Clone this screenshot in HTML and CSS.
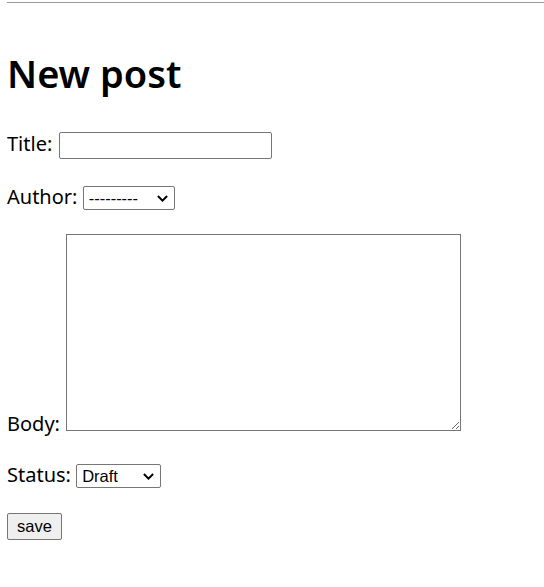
FILE: index.html
```html
<!DOCTYPE html>
<html lang="en">
<head>
<meta charset="utf-8">
<title>New post</title>
<link rel="stylesheet" href="styles.css">
</head>
<body>
<hr class="rule">
<h1 class="heading">New post</h1>
<form class="post-form">
  <p class="row"><label for="id_title">Title:</label> <input type="text" id="id_title" class="field-text"></p>
  <p class="row"><label for="id_author">Author:</label> <span class="select-wrap"><select id="id_author" class="field-select field-author"><option>---------</option></select><svg class="chevron" width="11" height="7" viewBox="0 0 11 7" aria-hidden="true"><path d="M0.9 1 L5.5 5.6 L10.1 1" fill="none" stroke="#000" stroke-width="2"/></svg></span></p>
  <p class="row"><label for="id_body">Body:</label> <textarea id="id_body" class="field-area"></textarea></p>
  <p class="row"><label for="id_status">Status:</label> <span class="select-wrap"><select id="id_status" class="field-select field-status"><option>Draft</option></select><svg class="chevron" width="11" height="7" viewBox="0 0 11 7" aria-hidden="true"><path d="M0.9 1 L5.5 5.6 L10.1 1" fill="none" stroke="#000" stroke-width="2"/></svg></span></p>
  <button type="submit" class="save-btn">save</button>
</form>
</body>
</html>
```

FILE: styles.css
```css
html, body {
  background: #fff;
}
body {
  margin: 0;
  padding: 0 0 0 7px;
  font-family: "Noto Sans", "Open Sans", sans-serif;
  font-size: 20px;
  color: #000;
}
.rule {
  margin: 2px 0 0 0;
  border: 0;
  border-top: 1px solid #999;
  height: 0;
}
.heading {
  font-size: 38px;
  font-weight: 600;
  margin: 42px 0 28px 0;
  line-height: 57px;
}
.post-form {
  margin: 0;
}
.row {
  margin: 24px 0;
}
.field-text,
.field-select,
.field-area,
.save-btn {
  font-family: "Liberation Sans", Arial, sans-serif;
  font-size: 16.5px;
  box-sizing: border-box;
  vertical-align: baseline;
}
.field-text {
  width: 213px;
  height: 27px;
  border: 1px solid #767676;
  border-radius: 2px;
  padding: 1px 3px;
  margin-left: 1px;
}
.select-wrap {
  position: relative;
  display: inline-flex;
}
.field-select {
  -webkit-appearance: none;
  appearance: none;
  border: 1px solid #767676;
  border-radius: 2px;
  background: #fff;
  color: #000;
  height: 24px;
  padding: 0 20px 0 5px;
  margin: 0;
}
.chevron {
  position: absolute;
  right: 7px;
  top: 9px;
  pointer-events: none;
}
.field-author {
  width: 92px;
}
.field-status {
  width: 85px;
}
.field-area {
  width: 395px;
  height: 197px;
  border: 1px solid #767676;
  border-radius: 0;
  resize: both;
  margin: 0 0 0 1px;
}
.save-btn {
  display: block;
  margin-top: 25px;
  width: 55px;
  height: 27px;
  background: #efefef;
  border: 1px solid #767676;
  border-radius: 2px;
  padding: 0;
  color: #000;
}
```
